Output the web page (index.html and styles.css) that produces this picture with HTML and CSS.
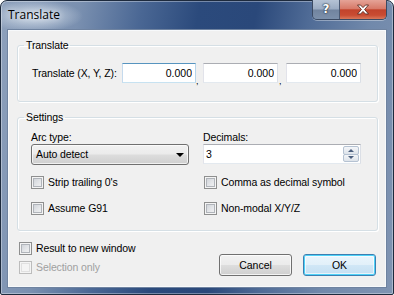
FILE: index.html
```html
<!DOCTYPE html>
<html>
<head>
<meta charset="utf-8">
<title>Translate</title>
<link rel="stylesheet" href="styles.css">
</head>
<body>
<div class="window">
  <div class="titlebar">
    <span class="title">Translate</span>
    <div class="caption">
      <button class="cap-btn help" type="button">?</button>
      <button class="cap-btn close" type="button" aria-label="Close">
        <svg width="16" height="11" viewBox="0 0 16 11"><path d="M2.5 1 L5.5 1 L8 3.6 L10.5 1 L13.5 1 L9.6 5.5 L13.5 10 L10.5 10 L8 7.4 L5.5 10 L2.5 10 L6.4 5.5 Z" fill="#fff" stroke="#5a2a22" stroke-width="0.9" stroke-linejoin="round"/></svg>
      </button>
    </div>
  </div>
  <div class="client">
    <fieldset class="group group-translate">
      <legend>Translate</legend>
      <div class="xyz-row">
        <label class="xyz-label">Translate (X, Y, Z):</label>
        <input class="field num focused w74" type="text" value="0.000">
        <span class="sep sep1">,</span>
        <input class="field num w75" type="text" value="0.000">
        <span class="sep sep2">,</span>
        <input class="field num w75" type="text" value="0.000">
      </div>
    </fieldset>
    <fieldset class="group group-settings">
      <legend>Settings</legend>
      <div class="settings-grid">
        <div class="cell">
          <div class="cap">Arc type:</div>
          <div class="combo"><span>Auto detect</span><span class="combo-arrow"></span></div>
        </div>
        <div class="cell">
          <div class="cap">Decimals:</div>
          <div class="spin">
            <span class="spin-value">3</span>
            <span class="spin-btns">
              <span class="spin-btn up"><span class="tri-up"></span></span>
              <span class="spin-btn down"><span class="tri-down"></span></span>
            </span>
          </div>
        </div>
        <label class="check row1"><span class="box"></span><span>Strip trailing 0's</span></label>
        <label class="check row1 right"><span class="box"></span><span>Comma as decimal symbol</span></label>
        <label class="check row2"><span class="box"></span><span>Assume G91</span></label>
        <label class="check row2 right"><span class="box"></span><span>Non-modal X/Y/Z</span></label>
      </div>
    </fieldset>
    <div class="bottom">
      <div class="bottom-checks">
        <label class="check"><span class="box"></span><span>Result to new window</span></label>
        <label class="check disabled"><span class="box"></span><span>Selection only</span></label>
      </div>
      <div class="buttons">
        <button class="btn" type="button">Cancel</button>
        <button class="btn default" type="button">OK</button>
      </div>
    </div>
  </div>
</div>
</body>
</html>
```
FILE: styles.css
```css
html, body {
  margin: 0;
  padding: 0;
  width: 394px;
  height: 295px;
  overflow: hidden;
  background: #fff;
}

body {
  font-family: "Liberation Sans", Arial, sans-serif;
  font-size: 10.5px;
  letter-spacing: -0.1px;
  color: #000;
}

.window {
  box-sizing: border-box;
  width: 394px;
  height: 295px;
  border: 1px solid #1d2a3d;
  border-radius: 7px 7px 2px 2px;
  padding: 0 6px 6px;
  display: flex;
  flex-direction: column;
  background:
    radial-gradient(ellipse 48px 16px at 34px 15px, rgba(215,225,236,0.95), rgba(215,225,236,0) 100%),
    linear-gradient(100deg, #8ea1bc 0%, #7a90b0 18%, #4a6794 32%, #2b4a7c 45%, #2a487a 58%, #4f6b96 70%, #7189ab 84%, #8094b2 100%);
  box-shadow: inset 0 0 0 1px rgba(255,255,255,0.35);
}

.titlebar {
  height: 28px;
  flex: none;
  display: flex;
  align-items: flex-start;
}

.title {
  margin: 5px 0 0 1px;
  font-family: "Open Sans", "Noto Sans", sans-serif;
  font-size: 12px;
  line-height: 17px;
  letter-spacing: 0;
  color: #000;
  text-shadow: 0 0 6px rgba(255,255,255,0.9);
}

.caption {
  margin-left: auto;
  margin-top: -1px;
  display: flex;
  border: 1px solid #3b4a62;
  border-top: none;
  border-radius: 0 0 5px 5px;
  overflow: hidden;
  box-shadow: 0 1px 0 rgba(255,255,255,0.35);
}

.cap-btn {
  height: 19px;
  margin: 0;
  padding: 0;
  border: none;
  display: flex;
  align-items: center;
  justify-content: center;
}

.help {
  width: 27px;
  border-right: 1px solid #4a5a74;
  background: linear-gradient(#b5c3d5 0%, #9aabc2 48%, #71849f 52%, #7c90ab 100%);
  color: #fff;
  font-family: "DejaVu Sans", sans-serif;
  font-weight: bold;
  font-size: 12px;
  line-height: 19px;
  text-shadow: 0 0 1px #2c3440, 0 0 1px #2c3440, 0 0 2px #2c3440;
}

.close {
  width: 46px;
  background: linear-gradient(#e5a397 0%, #d77a69 45%, #c2432c 52%, #c94c32 80%, #d9785b 100%);
}

.client {
  flex: 1;
  background: #f0f0f0;
  border: 1px solid #6f83a0;
  box-shadow: inset 0 0 0 1px #f7f9fb;
  padding: 0 8px 0 9px;
  display: flex;
  flex-direction: column;
}

.group {
  margin: 9px 0 0;
  padding: 0 0 0 6px;
  border: 1px solid #d5dfe5;
  border-radius: 3px;
  box-shadow: inset 1px 1px 0 #fff, 1px 1px 0 #fff;
  min-width: 0;
}

.group legend {
  padding: 0 2px;
  line-height: 13px;
  height: 13px;
}

.group-translate {
  padding-bottom: 18px;
}

.xyz-row {
  display: flex;
  align-items: flex-start;
  margin: 11px 0 0 8px;
}

.xyz-label {
  width: 90px;
  flex: none;
  line-height: 20px;
}

.field {
  box-sizing: border-box;
  height: 20px;
  margin: 0;
  padding: 0 3px;
  font: inherit;
  color: #000;
  background: #fff;
  border: 1px solid;
  border-color: #abadb3 #dbdfe6 #e3e9ef #e2e3ea;
  outline: none;
  flex: none;
}

.field.num {
  text-align: right;
}

.field.focused {
  border-color: #5794bf #b7d5ea #c7e2f1 #c5daed;
}

.w74 { width: 74px; }
.w75 { width: 75px; }

.sep {
  flex: none;
  font-size: 9px;
  line-height: 10px;
  height: 10px;
  align-self: flex-end;
  margin-bottom: -3px;
  overflow: hidden;
  text-indent: 0;
}

.sep1 { width: 7px; }
.sep2 { width: 8px; text-indent: 1px; }

.group-settings {
  padding-bottom: 15px;
}

.settings-grid {
  display: grid;
  grid-template-columns: 158px 158px;
  column-gap: 14px;
  margin: 7px 0 0 7px;
}

.cap {
  line-height: 13px;
  height: 13px;
}

.combo {
  box-sizing: border-box;
  height: 21px;
  margin-top: 0;
  border: 1px solid #707070;
  border-radius: 3px;
  background: linear-gradient(#f2f2f2 0%, #ebebeb 48%, #dddddd 52%, #cfcfcf 100%);
  box-shadow: inset 0 0 0 1px rgba(255,255,255,0.7);
  display: flex;
  align-items: center;
  padding: 0 0 0 4px;
  line-height: 19px;
  position: relative;
}

.combo-arrow {
  margin-left: auto;
  margin-right: 4px;
  width: 0;
  height: 0;
  border-left: 4px solid transparent;
  border-right: 4px solid transparent;
  border-top: 4px solid #000;
}

.spin {
  box-sizing: border-box;
  height: 20px;
  border: 1px solid;
  border-color: #abadb3 #dbdfe6 #e3e9ef #e2e3ea;
  background: #fff;
  display: flex;
  align-items: stretch;
}

.spin-value {
  flex: 1;
  line-height: 18px;
  padding-left: 2px;
}

.spin-btns {
  width: 16px;
  display: flex;
  flex-direction: column;
  padding: 1px 1px 1px 0;
}

.spin-btn {
  flex: 1;
  display: flex;
  align-items: center;
  justify-content: center;
  border: 1px solid #b5c2d2;
  border-radius: 2px;
  background: linear-gradient(#f4f6f9, #dde3ea);
}

.spin-btn.down {
  margin-top: -1px;
}

.tri-up {
  width: 0; height: 0;
  border-left: 3px solid transparent;
  border-right: 3px solid transparent;
  border-bottom: 3px solid #4c607f;
}

.tri-down {
  width: 0; height: 0;
  border-left: 3px solid transparent;
  border-right: 3px solid transparent;
  border-top: 3px solid #4c607f;
}

.check {
  display: flex;
  align-items: center;
  gap: 4px;
  line-height: 13px;
  height: 13px;
}

.check.row1 { margin-top: 11px; }
.check.row2 { margin-top: 13px; }
.check.right { margin-left: 1px; }

.box {
  box-sizing: border-box;
  width: 13px;
  height: 13px;
  flex: none;
  border: 1px solid #8e8f8f;
  background: linear-gradient(135deg, #c9cdd3 0%, #e4e6e9 55%, #f6f6f6 100%);
  box-shadow: inset 0 0 0 1px #f4f4f4, inset 0 0 0 2px #b0b4ba;
}

.check.disabled {
  color: #a0a0a0;
}

.check.disabled .box {
  border-color: #bcbcbc;
  background: #f4f4f4;
  box-shadow: inset 0 0 0 1px #f4f4f4, inset 0 0 0 2px #e0e0e0;
}

.bottom {
  display: flex;
  align-items: flex-start;
  margin: 11px 0 0 0;
}

.bottom-checks {
  display: flex;
  flex-direction: column;
  gap: 6px;
  margin-left: 2px;
}

.buttons {
  margin-left: auto;
  margin-right: 2px;
  margin-top: 12px;
  display: flex;
  gap: 11px;
}

.btn {
  box-sizing: border-box;
  width: 73px;
  height: 22px;
  margin: 0;
  padding: 0;
  font: inherit;
  color: #000;
  border: 1px solid #707070;
  border-radius: 3px;
  background: linear-gradient(#f2f2f2 0%, #ebebeb 48%, #dddddd 52%, #cfcfcf 100%);
  box-shadow: inset 0 0 0 1px rgba(255,255,255,0.75);
}

.btn.default {
  border-color: #3c7fb1;
  box-shadow: inset 0 0 0 1px #4fd2f8, inset 0 0 0 2px rgba(255,255,255,0.6);
  background: linear-gradient(#eaf6fd 0%, #e2f0f9 48%, #d0e7f6 52%, #c4dff2 100%);
}
```
